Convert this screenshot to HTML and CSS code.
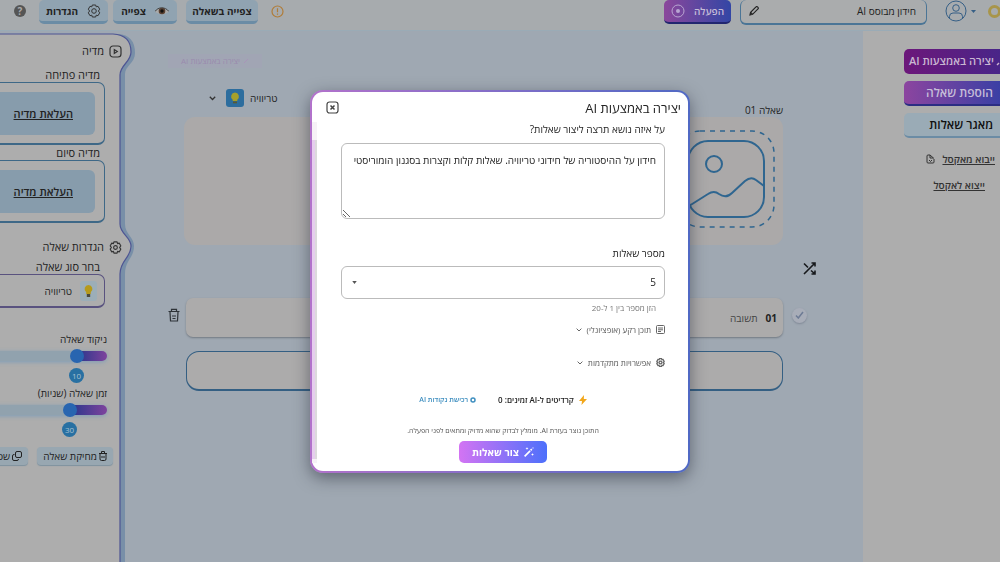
FILE: index.html
```html
<!DOCTYPE html>
<html lang="he" dir="rtl">
<head>
<meta charset="utf-8">
<meta name="viewport" content="width=device-width, initial-scale=1">
<title>חידון מבוסס AI</title>
<link rel="stylesheet" href="styles.css">
</head>
<body>
<header class="topbar">
  <span class="coin"></span>
  <button class="account" aria-label="חשבון">
    <svg width="22" height="22" viewBox="0 0 22 22" fill="none" stroke="#365f86"><circle cx="11" cy="11" r="10"/><circle cx="11" cy="8" r="3.3"/><path d="M4.5 18v-1.500a3.500 3.500 0 0 1 3.500-3.500h6a3.500 3.500 0 0 1 3.500 3.500V18"/></svg>
    <svg class="account-caret" width="5" height="3" viewBox="0 0 5 3"><path d="M0 0h5L2.500 3z" fill="#365f86"/></svg>
  </button>
  <div class="quiz-name">
    <input type="text" value="חידון מבוסס AI" aria-label="שם החידון">
    <svg width="10" height="10" viewBox="0 0 10 10" fill="none" stroke="#222" stroke-width="1.200"><path d="M1 9l.6-2.700L7 .9a1 1 0 0 1 1.500 0l.5.5a1 1 0 0 1 0 1.500L3.600 8.300zM1.700 6.400l1.900 1.900"/></svg>
  </div>
  <button class="launch">הפעלה
    <svg width="14" height="14" viewBox="0 0 14 14"><circle cx="7" cy="7" r="6" fill="none" stroke="#b9a6d2"/><circle cx="7" cy="7" r="2" fill="#b9a6d2"/></svg>
  </button>
  <span class="spacer"></span>
  <svg class="alert" width="13" height="13" viewBox="0 0 13 13" fill="none" stroke="#b07c38" stroke-width="1.200"><circle cx="6.500" cy="6.500" r="5.500"/><path d="M6.500 3.200v4M6.500 8.600v1.200"/></svg>
  <button class="tool tool-question">צפייה בשאלה</button>
  <button class="tool tool-preview">
    <svg width="14" height="10" viewBox="0 0 14 10"><path d="M0 5.500C3 1.500 9 1 14 5.500 10 9 4 9 0 5.500z" fill="#aaa"/><circle cx="7" cy="5" r="3.300" fill="#5a4030"/><circle cx="7" cy="5" r="1.700" fill="#111"/><path d="M0 5.500C3 .8 10 .3 14 5.500" fill="none" stroke="#444"/></svg>
    צפייה</button>
  <button class="tool tool-settings">
    <svg width="14" height="14" viewBox="0 0 14 14" fill="none" stroke="#333"><path d="M5.300 1h3.400l.5 1.800 1.800-.5L12.700 5.200 11.400 7l1.300 1.800-1.700 2.900-1.800-.5-.5 1.800H5.300l-.5-1.800-1.800.5L1.300 8.800 2.600 7 1.300 5.200 3 2.300l1.800.5z" stroke-linejoin="round"/><circle cx="7" cy="7" r="2.300"/></svg>
    הגדרות</button>
  <button class="help" aria-label="עזרה">?</button>
</header>

<div class="workspace">
  <aside class="actions">
    <button class="action action-ai">
      <svg width="8" height="10" viewBox="0 0 8 10"><path d="M1 9l2-2" stroke="#ccb5cf" stroke-width="1.500"/></svg>יצירה באמצעות AI</button>
    <button class="action action-add">הוספת שאלה</button>
    <button class="action action-bank">מאגר שאלות</button>
    <a class="excel excel-in" href="#"><span>ייבוא מאקסל</span>
      <svg width="9" height="10" viewBox="0 0 9 10" fill="none" stroke="#333"><path d="M4 1H2a1 1 0 0 0-1 1v6a1 1 0 0 0 1 1h5a1 1 0 0 0 1-1V5M4 1l4 3.500M4 1v3h3M3 6l1.500 1.500L6 6"/></svg></a>
    <a class="excel excel-out" href="#"><span>ייצוא לאקסל</span></a>
  </aside>

  <main class="editor">
    <div class="ghost">יצירה באמצעות AI <svg width="6" height="6" viewBox="0 0 6 6"><path d="M1 5l4-4" stroke="#a894b8"/></svg></div>
    <div class="question-head">
      <h2 class="question-title">שאלה 01</h2>
      <button class="kind">טריוויה
        <svg width="18" height="18" viewBox="0 0 18 18"><rect width="18" height="18" rx="3" fill="#2c6d9e"/><path d="M9 3.500a4 4 0 0 1 2.300 7.200V12H6.700v-1.300A4 4 0 0 1 9 3.500z" fill="#a6a02a"/><path d="M7 12.500h4v1.800H7z" fill="#565a34"/></svg>
        <svg width="7" height="5" viewBox="0 0 7 5" fill="none" stroke="#333" stroke-width="1.300"><path d="M.8.8l2.700 2.700L6.200.8"/></svg>
      </button>
    </div>
    <section class="question-card">
      <svg width="98" height="98" viewBox="0 0 98 98" fill="none" stroke="#2f6690"><rect x="1" y="1" width="96" height="96" rx="22" stroke-width="1.500" stroke-dasharray="5 5"/><rect x="11" y="11" width="76" height="76" rx="20" stroke-width="2"/><circle cx="37" cy="34" r="8" stroke-width="2"/><path d="M12 76l19-12q6-4 11 0 7 5 13-1l13-12q6-5 11-1l8 6" stroke-width="2"/></svg>
    </section>
    <button class="shuffle" aria-label="ערבוב">
      <svg width="13" height="13" viewBox="0 0 13 13" fill="none" stroke="#17191c" stroke-width="1.600"><path d="M1 12L11.500 1.500M8.500 1H12v3.500M1 1.500l4 4M8 8.500l3.500 3M8.500 12H12V8.500"/></svg>
    </button>
    <div class="answer">
      <button class="correct" aria-label="תשובה נכונה"><svg width="9" height="8" viewBox="0 0 9 8"><path d="M1 4.500L3.300 7 8 1" fill="none" stroke="#6d7b95" stroke-width="1.500"/></svg></button>
      <label class="answer-box"><b>01</b><input type="text" placeholder="תשובה"></label>
      <button class="remove" aria-label="מחיקת תשובה"><svg width="12" height="14" viewBox="0 0 12 14" fill="none" stroke="#2e3338" stroke-width="1.200"><path d="M.5 3.500h11M3.500 3.500V1.300h5v2.200M2 4l.5 9h7L10 4M4 8h4M4.500 10.500h3"/></svg></button>
    </div>
    <div class="answer answer-next"><div class="answer-box answer-empty"></div></div>
  </main>

  <aside class="sidebar">
    <svg class="sidebar-shape" width="137" height="600" viewBox="0 0 137 600">
      <path d="M0 1H118Q135 2 135 20C135 30 125 33 125 41V191C125 201 134 204 134 213C134 225 125 227 125 241V600H0z" fill="#788fa8"/>
      <path d="M-2 1H113Q131 2 131 19C131 29 120 32 120 42V191C120 201 131 204 131 213C131 225 120 227 120 241V602H-2z" fill="#adadad" stroke="#4e5593" stroke-width="1.200"/>
    </svg>
    <div class="sidebar-body">
      <h2 class="group"><svg width="13" height="13" viewBox="0 0 13 13" fill="none" stroke="#333" stroke-width="1.200"><rect x="1" y="1" width="11" height="11" rx="3"/><path d="M5.300 4.500v4l3-2z"/></svg>מדיה</h2>
      <h3 class="field-title">מדיה פתיחה</h3>
      <div class="media"><button class="upload">העלאת מדיה</button></div>
      <h3 class="field-title">מדיה סיום</h3>
      <div class="media"><button class="upload">העלאת מדיה</button></div>
      <h2 class="group group-question"><svg width="13" height="13" viewBox="0 0 14 14" fill="none" stroke="#333" stroke-width="1.200"><path d="M5.300 1h3.400l.5 1.800 1.800-.5L12.700 5.200 11.400 7l1.300 1.800-1.700 2.900-1.800-.5-.5 1.800H5.300l-.5-1.800-1.800.5L1.300 8.800 2.600 7 1.300 5.200 3 2.300l1.800.5z" stroke-linejoin="round"/><circle cx="7" cy="7" r="2"/></svg>הגדרות שאלה</h2>
      <h3 class="field-title">בחר סוג שאלה</h3>
      <button class="kind-box"><svg width="17" height="20" viewBox="0 0 17 20"><rect width="17" height="20" rx="3" fill="#9caeb8"/><path d="M8.500 4a4 4 0 0 1 2.300 7.200V13H6.200v-1.800A4 4 0 0 1 8.500 4z" fill="#b59a1c"/><path d="M6.800 13h3.400v3H6.800z" fill="#4a4a3c"/></svg>טריוויה</button>
      <label class="range-title range-first" for="points">ניקוד שאלה</label>
      <input class="range range-points" id="points" type="range" min="0" max="60" value="10">
      <output class="bubble bubble-points" for="points">10</output>
      <label class="range-title" for="seconds">זמן שאלה (שניות)</label>
      <input class="range range-seconds" id="seconds" type="range" min="0" max="135" value="30">
      <output class="bubble bubble-seconds" for="seconds">30</output>
      <div class="question-tools">
        <button class="small"><svg width="8" height="10" viewBox="0 0 8 10" fill="none" stroke="#222"><path d="M0 2.500h8M2.500 2.500v-2h3v2M1 2.500V8q0 1.500 1.500 1.500h3Q7 9.500 7 8V2.500M3 5v2M5 5v2"/></svg>מחיקת שאלה</button>
        <button class="small"><svg width="10" height="10" viewBox="0 0 10 10" fill="none" stroke="#222"><rect x="3.500" y=".5" width="6" height="6" rx="1.500"/><path d="M2.500 3.500H2A1.500 1.500 0 0 0 .5 5v3A1.500 1.500 0 0 0 2 9.500h3A1.500 1.500 0 0 0 6.500 8"/></svg>שכפול שאלה</button>
      </div>
    </div>
  </aside>
</div>

<div class="modal-layer">
  <div class="modal" role="dialog" aria-modal="true" aria-labelledby="modal-title">
    <div class="modal-head">
      <h1 id="modal-title">יצירה באמצעות AI</h1>
      <button class="close" aria-label="סגירה"><svg width="13" height="13" viewBox="0 0 13 13" fill="none" stroke="#444" stroke-width="1.200"><rect x="1" y="1" width="11" height="11" rx="2.500"/><path d="M4.500 4.500l4 4M8.500 4.500l-4 4" stroke-width="1.500"/></svg></button>
    </div>
    <div class="modal-main">
      <form class="form">
        <label class="label" for="topic">על איזה נושא תרצה ליצור שאלות?</label>
        <textarea id="topic">חידון על ההיסטוריה של חידוני טריוויה. שאלות קלות וקצרות בסגנון הומוריסטי</textarea>
        <label class="label label-count" for="count">מספר שאלות</label>
        <div class="select-wrap">
          <select id="count"><option>5</option></select>
          <svg width="5" height="3" viewBox="0 0 6 4"><path d="M0 0h6L3 4z" fill="#555"/></svg>
        </div>
        <p class="hint">הזן מספר בין 1 ל-20</p>
        <button type="button" class="fold"><svg width="9" height="9" viewBox="0 0 9 9" fill="none" stroke="#666"><rect x=".5" y=".5" width="8" height="8" rx="1"/><path d="M2 3h5M2 4.800h5M2 6.500h3"/></svg>תוכן רקע (אופציונלי)<svg width="6" height="4" viewBox="0 0 6 4"><path d="M.6.6L3 3 5.400.6" fill="none" stroke="#666"/></svg></button>
        <button type="button" class="fold"><svg width="9" height="9" viewBox="0 0 14 14" fill="none" stroke="#666" stroke-width="2"><path d="M5.300 1h3.400l.5 1.800 1.800-.5L12.700 5.200 11.400 7l1.300 1.800-1.700 2.900-1.800-.5-.5 1.800H5.300l-.5-1.800-1.800.5L1.300 8.800 2.600 7 1.300 5.200 3 2.300l1.800.5z"/><circle cx="7" cy="7" r="2.300"/></svg>אפשרויות מתקדמות<svg width="6" height="4" viewBox="0 0 6 4"><path d="M.6.6L3 3 5.400.6" fill="none" stroke="#666"/></svg></button>
        <div class="credits">
          <span class="balance"><svg width="8" height="10" viewBox="0 0 8 10"><path d="M5 0L0 6h3L2.500 10 8 4H4.800z" fill="#f2a71b"/></svg>קרדיטים ל-AI זמינים: 0</span>
          <a class="buy" href="#"><svg width="6" height="6" viewBox="0 0 6 6"><circle cx="3" cy="3" r="2" fill="none" stroke="#3f8fc0" stroke-width="1.500"/></svg>רכישת נקודות AI</a>
        </div>
        <p class="notice">התוכן נוצר בעזרת AI. מומלץ לבדוק שהוא מדויק ומתאים לפני הפעלה.</p>
        <button type="button" class="create"><svg width="10" height="10" viewBox="0 0 10 10" fill="#fff"><path d="M0 8.800L5.500 3.300 6.700 4.500 1.200 10zM6 2.800L7.200 1.600 8.400 2.800 7.200 4zM3 0l.4 1.100 1.100.4-1.100.4L3 3l-.4-1.100-1.100-.4 1.100-.4zM8.500 6l.4 1.100 1.100.4-1.100.4L8.500 9l-.4-1.100L7 7.500l1.100-.4zM9 0l.3.7.7.3-.7.3L9 2l-.3-.7L8 1l.7-.3z"/></svg>צור שאלות</button>
      </form>
      <div class="scroll"><div class="scroll-thumb"></div></div>
    </div>
  </div>
</div>
</body>
</html>
```

FILE: styles.css
```css
* { box-sizing: border-box; }
html, body { height: 100%; }
body {
  margin: 0;
  display: flex;
  flex-direction: column;
  overflow: hidden;
  background: #9fa8b2;
  color: #222;
  font: 10px/14px "Open Sans", "Liberation Sans", sans-serif;
}
h1, h2, h3, p { margin: 0; font-weight: 400; }
button, input, textarea, select { font: inherit; color: inherit; }
button { border: 0; padding: 0; background: none; white-space: nowrap; }
svg { flex: none; display: block; }

/* top bar */
.topbar {
  flex: none;
  display: flex;
  align-items: flex-start;
  height: 31px;
  background: #a7abae;
  border-bottom: 1px solid #9aabb6;
}
.coin { width: 13px; height: 13px; margin: 5px -1px 0 0; border: 3px solid #a8954a; border-radius: 50%; }
.account { display: flex; flex-direction: row-reverse; align-items: center; gap: 4px; margin: 0 12px 0 0; }
.quiz-name {
  display: flex;
  align-items: center;
  width: 187px;
  height: 25px;
  margin-right: 18px;
  padding: 0 10px 2px 8px;
  border: 1px solid #4b7596;
  border-top: 0;
  border-bottom-width: 2px;
  border-radius: 6px;
  background: #aaacad;
}
.quiz-name input { flex: 1; min-width: 0; border: 0; padding: 0; background: none; }
.launch {
  display: flex;
  align-items: center;
  justify-content: center;
  gap: 9px;
  width: 67px;
  height: 24px;
  margin-right: 9px;
  padding-bottom: 1px;
  border-bottom: 2px solid #22266f;
  border-radius: 5px;
  background: linear-gradient(to left, #3346a5, #8b479b);
  color: #c5bdd8;
  font-weight: 600;
}
.spacer { flex: 1; }
.alert { margin: 5px 0 0 25px; }
.tool {
  display: flex;
  align-items: center;
  justify-content: center;
  gap: 9px;
  height: 24px;
  border-bottom: 3px solid #6b8ca5;
  border-radius: 5px;
  background: #90a3b1;
  font-weight: 700;
}
.alert { margin-left: 13px; }
.tool-question { width: 72px; margin: 0 0 0 9px; }
.tool-preview { width: 64px; margin-left: 5px; }
.tool-settings { width: 69px; margin-left: 13px; }
.help { width: 12px; height: 12px; margin: 5px 0 0 14px; border-radius: 50%; background: #555; color: #aaa; line-height: 12px; font-weight: 700; }

.workspace { flex: 1; min-height: 0; display: flex; overflow: hidden; }

/* action column */
.actions { flex: none; width: 137px; padding: 18px 0 0; background: #adadad; display: flex; flex-direction: column; align-items: stretch; overflow: hidden; }
.action {
  display: flex;
  align-items: center;
  gap: 2px;
  height: 25px;
  margin: 0 -12px 7px 41px;
  padding-right: 19px;
  border-radius: 5px;
  font-size: 12px;
  font-weight: 700;
}
.action-ai { padding: 0 8px 2px 0; background: linear-gradient(to left, #45278a, #6c177a); color: #c9b7d2; font-size: 11px; font-weight: 600; }
.action-add { background: linear-gradient(to left, #313fa5, #8c459f); color: #c5bdd8; border-bottom: 2px solid #2b2d83; font-weight: 600; }
.action-bank { background: #9aabb6; border-bottom: 2px solid #6b8ca5; color: #111; font-weight: 600; }
.excel { display: flex; align-items: center; gap: 7px; margin: 7px 5px 0 0; color: #333; font-size: 10px; font-weight: 600; text-decoration: underline; }
.excel-out { margin: 12px 15px 0 0; }

/* editor */
.editor { flex: 1; min-width: 0; padding: 23px 56px 0 36px; }
.ghost { display: flex; align-items: center; justify-content: center; flex-direction: row-reverse; gap: 3px; width: 94px; height: 14px; margin-right: auto; background: #a1a5b4; color: #9a8bae; font-size: 8px; }
.question-head { display: flex; justify-content: space-between; align-items: flex-end; height: 49px; margin: 0 24px 0 41px; }
.question-title { font-size: 10px; }
.kind { display: flex; align-items: center; gap: 6px; margin-bottom: 10px; }
.kind svg + svg { margin-right: 4px; }
.question-card { display: flex; align-items: center; height: 128px; margin: 0 24px 0 16px; padding: 0 8px 4px 0; border-radius: 11px; background: #aba9a9; }
.shuffle { display: block; margin: 17px -9px 0 0; }
.answer { display: flex; align-items: center; gap: 6px; margin-top: 23px; }
.correct { width: 15px; height: 15px; margin: 0 0 5px 3px; display: grid; place-items: center; border-radius: 50%; background: #a8adb8; box-shadow: 0 1px 2px #7f8896; }
.remove { margin-bottom: 5px; }
.answer-box { flex: 1; display: flex; align-items: center; gap: 8px; height: 39px; padding: 0 6px; border-radius: 7px; background: #acabab; box-shadow: 0 1px 2px #717982; }
.answer-box input { flex: 1; min-width: 0; padding: 0; border: 0; background: none; }
.answer-box input::placeholder { color: #444; }
.answer-next { margin: 14px 24px 0 18px; }
.answer-empty { height: 40px; border: 1px solid #345f83; border-bottom-width: 2px; border-radius: 13px; box-shadow: none; }

/* sidebar */
.sidebar { flex: none; position: relative; width: 132px; }
.sidebar-shape { position: absolute; top: 2px; left: 0; }
.sidebar-body { position: relative; width: 132px; height: 100%; padding: 13px 0 0; overflow: hidden; }
.group { display: flex; align-items: center; gap: 5px; margin-right: 10px; font-size: 11px; line-height: 14px; }
.group-question { margin-top: 17px; }
.field-title { margin: 9px 32px 0 0; font-size: 11px; line-height: 15px; }
.media { width: 150px; height: 63px; margin-right: 27px; padding: 9px; border: 1px solid #3e6887; border-bottom-width: 2px; border-radius: 7px; }
.media + .field-title { margin-top: 0; }
.upload { display: block; width: 100%; height: 43px; padding-right: 22px; border-radius: 6px; background: #879cac; font-size: 11px; font-weight: 600; text-align: right; text-decoration: underline; }
.group-question + .field-title { margin-top: 5px; }
.kind-box { display: flex; align-items: center; gap: 8px; width: 150px; height: 34px; margin-right: 27px; padding-right: 7px; border: 1px solid #59527f; border-bottom-width: 2px; border-radius: 7px; }
.range-title { display: block; margin-right: 25px; line-height: 14px; }
.range-first { margin-top: 24px; }
.range { display: block; appearance: none; width: 150px; height: 10px; margin: 5px 25px 0 0; border-radius: 5px; box-shadow: 0 1px 4px #7d9cb8; }
.range-points { background: linear-gradient(to left, #7e439d, #28378b 30px, #91a2ae 30px); }
.range-seconds { background: linear-gradient(to left, #7e439d, #28378b 37px, #91a2ae 37px); }
.range::-webkit-slider-thumb { appearance: none; width: 14px; height: 14px; border-radius: 50%; background: #2865b0; }
.bubble { display: block; width: 15px; height: 15px; margin: 7px 48px 3px 0; border-radius: 50%; background: #2870a2; color: #a8c0d0; font-size: 8px; line-height: 15px; text-align: center; }
.bubble-seconds { margin-right: 55px; }
.question-tools { display: flex; gap: 9px; width: 170px; margin: 10px 19px 0 0; }
.small { display: flex; flex: none; align-items: center; gap: 2px; height: 18px; padding: 0 6px; border-radius: 4px; background: #98a7b1; box-shadow: 0 1px 1px #7e929f; }

/* modal */
.modal-layer { position: fixed; inset: 0; display: grid; place-items: center; }
.modal {
  width: 380px;
  max-width: 100%;
  padding-bottom: 8px;
  border: 2px solid transparent;
  border-radius: 13px;
  background: linear-gradient(#fff, #fff) padding-box, linear-gradient(to right, #b272cb, #5069c4) border-box;
  box-shadow: 0 5px 16px rgba(30, 34, 48, .5);
}
.modal-head { display: flex; justify-content: space-between; align-items: center; height: 30px; padding: 2px 7px 0 14px; }
.modal-head h1 { font-size: 13px; line-height: 18px; }
.modal-main { display: flex; }
.form { flex: 1; min-width: 0; display: flex; flex-direction: column; padding: 0 23px 0 24px; }
.label { margin-bottom: 6px; font-size: 10px; line-height: 15px; }
.form textarea { display: block; width: 100%; height: 76px; padding: 8px; border: 1px solid #bbb; border-radius: 6px; background: #fff; line-height: 16px; resize: vertical; }
.label-count { margin: 27px 0 5px; }
.select-wrap { display: grid; align-items: center; }
.select-wrap > * { grid-area: 1 / 1; }
.select-wrap select { appearance: none; width: 100%; height: 33px; padding: 0 8px; border: 1px solid #bbb; border-radius: 6px; background: #fff; }
.select-wrap svg { justify-self: end; margin-left: 11px; pointer-events: none; }
.hint { margin: 3px 9px 9px 0; color: #777; font-size: 8px; line-height: 12px; }
.fold { display: flex; align-items: center; gap: 5px; height: 14px; margin-bottom: 19px; color: #555; font-size: 8px; }
.credits { display: flex; justify-content: center; align-items: center; gap: 22px; height: 14px; margin-top: 4px; }
.balance, .buy { display: flex; align-items: center; gap: 5px; font-size: 8px; font-weight: 600; }
.buy { gap: 2px; color: #3f8fc0; font-size: 7px; text-decoration: none; }
.notice { margin: 18px 0 4px; color: #555; font-size: 7px; line-height: 12px; text-align: center; }
.create { align-self: center; display: flex; align-items: center; justify-content: center; gap: 5px; width: 88px; height: 22px; border-radius: 5px; background: linear-gradient(to left, #4d70fb, #d374f3); color: #fff; font-weight: 700; }
.scroll { display: flex; flex-direction: column; width: 5px; background: #f6f2f6; }
.scroll-thumb { flex: 1; margin: 18px 0 4px; border-left: 3px solid #e6cdee; background: #dcdadc; }
```
